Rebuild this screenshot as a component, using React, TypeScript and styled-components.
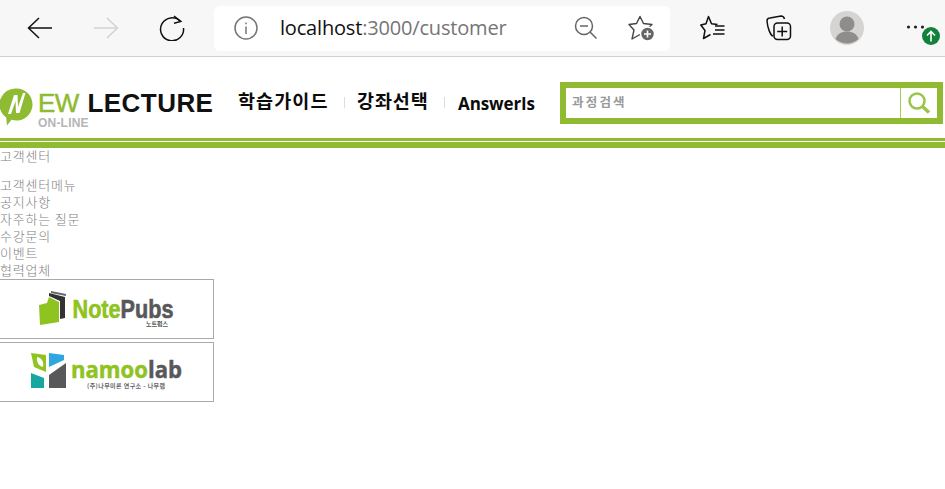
import React from "react";
import styled, { createGlobalStyle } from "styled-components";

const Global = createGlobalStyle`
  html, body { margin: 0; padding: 0; background: #fff; overflow: hidden; }
  body { font-family: "Noto Sans CJK KR", "Noto Sans", sans-serif; }
`;
const Page = styled.div`width: 945px; height: 489px; overflow: hidden; background: #fff;`;
const Chrome = styled.div`
  height: 56px; box-sizing: content-box; background: #f7f7f7; border-bottom: 1px solid #d0d0d0;
  display: flex; align-items: center; position: relative;
`;
const IconSlot = styled.div<{ $w: number }>`
  width: ${(p) => p.$w}px; height: 56px; flex: none; display: flex; align-items: center; justify-content: center;
`;
const Omnibox = styled.div`
  width: 456px; height: 45px; margin: 0 21px 0 2px; flex: none; background: #fff; border-radius: 6px;
  display: flex; align-items: center; box-sizing: border-box; padding-left: 20px;
`;
const Url = styled.div`
  margin-left: 22px; width: 294px; flex: none; font: 20px/28px "Open Sans", "Noto Sans", sans-serif; color: #757575; letter-spacing: -0.18px;
  b { font-weight: 400; color: #111; }
`;
const StarAdd = styled.svg`margin-left: 30px; flex: none;`;
const Dots = styled.svg`margin-bottom: 2px;`;
const Badge = styled.div`
  position: absolute; left: 922px; top: 27px; width: 18px; height: 18px; border-radius: 50%; background: #12813a;
  display: flex; align-items: center; justify-content: center;
`;
const Header = styled.header`height: 81px; display: flex; align-items: flex-start;`;
const Logo = styled.div`width: 214px; height: 81px; flex: none; display: flex; align-items: flex-start; padding-top: 31px; box-sizing: border-box;`;
const LogoMark = styled.svg`flex: none;`;
const LogoText = styled.div`margin-left: 5px; position: relative; width: 175px; height: 42px;`;
const LogoMain = styled.div`
  font: 700 26px/30px "Liberation Sans", sans-serif; white-space: nowrap; color: #111; letter-spacing: 0.45px;
  span { color: #8fbb33; font-weight: 400; margin-right: 9px; letter-spacing: -0.7px; -webkit-text-stroke: 0.5px #8fbb33; }
`;
const LogoSub = styled.div`
  position: absolute; left: 0; top: 28px; font: 700 12px/14px "Liberation Sans", sans-serif; color: #b5b5b5; letter-spacing: 0.2px;
`;
const Nav = styled.nav`width: 346px; flex: none; display: flex; align-items: center; height: 20px; margin-top: 35px;`;
const NavFirst = styled.a`
  width: 130px; box-sizing: border-box; padding-left: 24px; flex: none; font: 700 18.500px/20px "Noto Sans CJK KR", sans-serif; color: #0b0b0b; white-space: nowrap; letter-spacing: 1.1px; position: relative; top: -2px;
`;
const NavSecond = styled(NavFirst)`width: 99px; padding-left: 12px; letter-spacing: 0.9px;`;
const NavLatin = styled.a`
  flex: 1; padding-left: 13px; font: 700 17px/20px "Open Sans", sans-serif; color: #0b0b0b; white-space: nowrap; letter-spacing: -0.1px; position: relative; top: 2px;
`;
const NavSep = styled.i`width: 1px; height: 11px; background: #ddd; flex: none;`;
const Search = styled.div`
  width: 383px; height: 42px; margin-top: 25px; box-sizing: border-box; border: 6px solid #8fba32; background: #fff; flex: none;
  display: flex; align-items: stretch;
`;
const SearchLabel = styled.div`
  flex: 1; padding-left: 6px; font: 700 12.500px/28px "Noto Sans CJK KR", sans-serif; color: #999; letter-spacing: 2.2px;
`;
const SearchBtn = styled.div`
  width: 36px; flex: none; border-left: 1px solid #a8cc5a; display: flex; align-items: center; justify-content: center;
`;
const Rule = styled.div`height: 10px; box-sizing: border-box; border-top: 3px solid #8fba32; border-bottom: 6px solid #8fba32;`;
const Content = styled.main`width: 214px; font: 300 13px/16px "Noto Sans CJK KR", sans-serif; color: #7f7f7f; letter-spacing: 0.8px;`;
const Title = styled.div`margin-bottom: 12px; height: 17px;`;
const MenuRow = styled.div`height: 17px; white-space: nowrap;`;
const Partner = styled.div`
  width: 215px; height: 60px; margin: 0 0 3px -1px; box-sizing: border-box; border: 1px solid #aaa; display: flex; align-items: center; justify-content: center; letter-spacing: 0;
`;

const Stroke = { fill: "none", stroke: "#111", strokeWidth: 1.5 } as const;

export default function App() {
  return (
    <Page>
      <Global />
      <Chrome>
        <IconSlot $w={80}>
          <svg width="28" height="24" viewBox="0 0 28 24" {...Stroke}><path d="M2 12h24M13 2 2.500 12 13 22" /></svg>
        </IconSlot>
        <IconSlot $w={52}>
          <svg width="28" height="24" viewBox="0 0 28 24" fill="none" stroke="#d2d2d2" strokeWidth="1.500"><path d="M2 12h24M15 2l10.500 10L15 22" /></svg>
        </IconSlot>
        <IconSlot $w={80}>
          <svg width="26" height="26" viewBox="0 0 26 26" {...Stroke}><path d="M21.500 6.500A11.500 11.500 0 1 0 24.500 13" /><path d="M15 1 21.800 6.500 15 8.200" /></svg>
        </IconSlot>
        <Omnibox>
          <svg width="24" height="24" viewBox="0 0 24 24" fill="none" stroke="#757575" strokeWidth="1.500"><circle cx="12" cy="12" r="11" /><path d="M12 10.500V18M12 6.500v1.800" /></svg>
          <Url><b>localhost</b>:3000/customer</Url>
          <svg width="24" height="24" viewBox="0 0 24 24" fill="none" stroke="#666" strokeWidth="1.500"><circle cx="10" cy="10" r="8.500" /><path d="M6 10h8M16 16l6.500 6.500" /></svg>
          <StarAdd width="28" height="28" viewBox="0 0 28 28" fill="none" stroke="#444" strokeWidth="1.400">
            <path d="M12 2.500 15.500 9.500 24 10.500 18 16 20 25 12 20.500 4 25 6 16 1 10.500 8.500 9.500z" strokeLinejoin="round" />
            <circle cx="19.500" cy="20" r="7" fill="#666" stroke="#fff" strokeWidth="1.500" />
            <path d="M19.500 16.500v7M16 20h7" stroke="#fff" strokeWidth="1.600" />
          </StarAdd>
        </Omnibox>
        <IconSlot $w={44}>
          <svg width="26" height="26" viewBox="0 0 26 26" {...Stroke}>
            <path d="M17.500 9.500 11.500 8.800 8.500 1.500 6 8.800 0.800 10 5 15.500 3.500 23.500 10.500 19.500" strokeLinejoin="round" />
            <path d="M15 11h9.500M15 15h9.500M13 19h11.500" />
          </svg>
        </IconSlot>
        <IconSlot $w={88}>
          <svg width="26" height="26" viewBox="0 0 26 26" {...Stroke}><path d="M7 21C4 20 1.500 12 1 6c0-2 1-3 3-3l11-2c2 0 3 1 3.500 3" /><rect x="8" y="8" width="16.500" height="16.500" rx="3.500" /><path d="M16.200 11.500v10M11.200 16.500h10" /></svg>
        </IconSlot>
        <IconSlot $w={48}>
          <svg width="34" height="34" viewBox="0 0 34 34"><circle cx="17" cy="17" r="17" fill="#d5d4d2" /><circle cx="17" cy="13" r="7.500" fill="#8f8d8b" /><path d="M5.500 28c2-5.500 6-7.500 11.500-7.500S26.500 22.500 28.500 28a17 17 0 0 1-23 0z" fill="#8f8d8b" /></svg>
        </IconSlot>
        <IconSlot $w={90}>
          <Dots width="20" height="6" viewBox="0 0 20 6" fill="#222"><circle cx="2.500" cy="3" r="1.600" /><circle cx="9.500" cy="3" r="1.600" /><circle cx="16.500" cy="3" r="1.600" /></Dots>
        </IconSlot>
        <Badge>
          <svg width="10" height="12" viewBox="0 0 10 12" fill="none" stroke="#fff" strokeWidth="1.600"><path d="M5 11.500V1.500M1 5.500l4-4 4 4" /></svg>
        </Badge>
      </Chrome>
      <Header>
        <Logo>
          <LogoMark width="33" height="38" viewBox="0 0 33 38">
            <path d="M16.500 0.500a16 16 0 1 1-5 31.200L7 37.500l-.800-8A16 16 0 0 1 16.500 0.500z" fill="#8fbb33" />
            <path d="M8 26 14 7h3.500L18 19 23 5h2.500L19.500 25H16l-.500-12L11 26z" fill="#fff" />
          </LogoMark>
          <LogoText>
            <LogoMain><span>EW</span>LECTURE</LogoMain>
            <LogoSub>ON-LINE</LogoSub>
          </LogoText>
        </Logo>
        <Nav>
          <NavFirst>학습가이드</NavFirst>
          <NavSep />
          <NavSecond>강좌선택</NavSecond>
          <NavSep />
          <NavLatin>AnswerIs</NavLatin>
        </Nav>
        <Search>
          <SearchLabel>과정검색</SearchLabel>
          <SearchBtn>
            <svg width="24" height="24" viewBox="0 0 24 24" fill="none" stroke="#9cc44a">
              <circle cx="10" cy="10" r="7.500" strokeWidth="2.500" />
              <path d="M15.500 15.500 22 21.500" strokeWidth="3.500" />
            </svg>
          </SearchBtn>
        </Search>
      </Header>
      <Rule />
      <Content>
        <Title>고객센터</Title>
        <MenuRow>고객센터메뉴</MenuRow>
        <MenuRow>공지사항</MenuRow>
        <MenuRow>자주하는 질문</MenuRow>
        <MenuRow>수강문의</MenuRow>
        <MenuRow>이벤트</MenuRow>
        <MenuRow>협력업체</MenuRow>
        <Partner>
          <svg width="136" height="36" viewBox="0 0 136 36">
            <path d="M10 2 26 6v21l-5 1V10L10 5z" fill="#333" />
            <path d="M12 0 27 3v2L12 2z" fill="#666" />
            <path d="M0 14l8-2 2-6 10 5v20L1 34z" fill="#8fc31f" />
            <text x="33.500" y="27" fontFamily="'Liberation Sans', sans-serif" fontWeight="700" fontSize="25" textLength="101" lengthAdjust="spacingAndGlyphs" stroke="#8fc31f" strokeWidth="0.600" fill="#8fc31f">Note<tspan fill="#58585a" stroke="#58585a">Pubs</tspan></text>
            <text x="107" y="34.500" fontFamily="'Noto Sans CJK KR', sans-serif" fontWeight="700" fontSize="6" fill="#555">노트펍스</text>
          </svg>
        </Partner>
        <Partner>
          <svg width="154" height="38" viewBox="0 0 154 38">
            <path d="M1 0l15 2v17L4 14z" fill="#8fc31f" />
            <path d="M7 4c5 1 7 5 6 10-4-1-7-5-6-10z" fill="#fff" />
            <path d="M19 0l15 2v5l-15 7z" fill="#2ea7e0" />
            <path d="M1 20l13 5v10H1z" fill="#18a6a0" />
            <path d="M19 35V22l17-12v25z" fill="#58585a" />
            <text x="41" y="25" fontFamily="'Open Sans', sans-serif" fontWeight="700" fontSize="24" textLength="111" lengthAdjust="spacingAndGlyphs" stroke="#8fc31f" strokeWidth="0.500" fill="#8fc31f">namoo<tspan fill="#58585a" stroke="#58585a">lab</tspan></text>
            <text x="57" y="35" fontFamily="'Noto Sans CJK KR', sans-serif" fontWeight="700" fontSize="6" textLength="78" fill="#666">(주)나무미론 연구소 - 나무랩</text>
          </svg>
        </Partner>
      </Content>
    </Page>
  );
}
